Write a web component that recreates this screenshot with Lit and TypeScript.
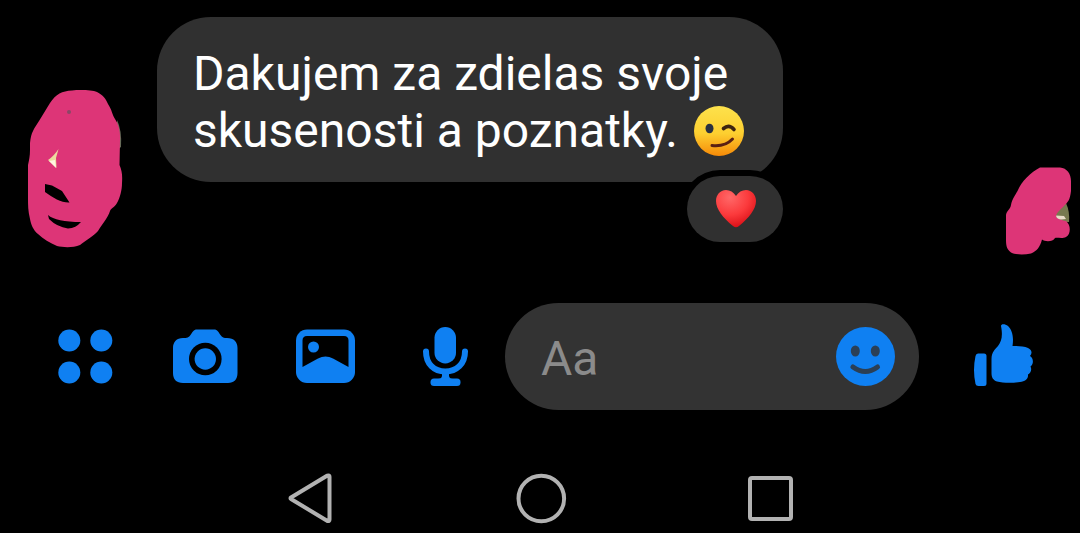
import { LitElement, html, css } from "lit";
import { customElement, state } from "lit/decorators.js";

@customElement("chat-thread")
class ChatThread extends LitElement {
  static styles = css`
    :host {
      display: block;
      padding: 17px 8px 0 28px;
    }
    .row {
      display: flex;
      align-items: flex-start;
      min-height: 238px;
    }
    .sender {
      flex: none;
      padding-top: 73px;
      margin-right: 34px;
    }
    .seen {
      flex: none;
      margin-left: auto;
      align-self: flex-end;
    }
    svg {
      display: block;
    }
    .message {
      position: relative;
    }
    .bubble {
      margin: 0;
      padding: 28px 38px 23px 36px;
      border-radius: 54px;
      background: #303030;
      color: #fff;
      font-size: 48px;
      line-height: 57px;
    }
    .emoji {
      display: inline-block;
      margin-left: 3px;
      vertical-align: -10px;
    }
    .reaction {
      position: absolute;
      right: 0;
      bottom: -60px;
      display: flex;
      align-items: center;
      justify-content: center;
      width: 96px;
      height: 66px;
      padding: 0 0 0 2px;
      border: 0;
      border-radius: 33px;
      background: #303030;
      box-shadow: 0 0 0 6px #000;
    }
  `;

  render() {
    return html`
      <div class="row">
        <div class="sender">
          <svg width="95" height="158" viewBox="28 90 95 158" role="img" aria-label="Sender">
            <path fill="#676b58" d="M117 120Q122 130 121 147L117 150Z" />
            <path
              fill="#dd3577"
              d="M72 90.500C80 89.500 92 90 97 92C103 95 106 99 108 104C112 110 112 114 115 119C119 125 120.500 132 120 140L119.500 165C122 171 122.500 175 122 183C122 190 120 198 117 203C114 208 111 208 110 211C108 218 102 224 98 231C94 236 86 240 80 245C73 248 63 247.500 57 246C50 243 43 239 38 234C33 230 31 224 30 219C28 211 28 205 28 198L28 165C29 160 30 156 30 150L30 143C31 132 34 129 39 121L50 103C56 94 62 91 72 90.500Z"
            />
            <path fill="#000" d="M45 184L52 185.500L62 191L69.500 202.500C62 203 53 198 45 192ZM48 215Q56 222 81 222Q76 228 68 228.500Q57 227 49 219Z" />
            <path fill="#ecdc9e" d="M58.500 149L56 158L56.500 168L48 160Q54 156 58.500 149Z" />
            <path fill="#fff6df" d="M49 161L55 160L56 168Z" />
            <circle cx="69" cy="112" r="2" fill="#8a4766" />
          </svg>
        </div>
        <div class="message">
          <p class="bubble">
            Dakujem za zdielas svoje<br />skusenosti a poznatky.
            <svg class="emoji" width="52" height="52" viewBox="0 0 52 52" role="img" aria-label="Winking face">
              <defs>
                <linearGradient id="face" x1="0" y1="0" x2="0" y2="1">
                  <stop offset="0" stop-color="#fde24c" />
                  <stop offset="0.550" stop-color="#fdcf30" />
                  <stop offset="1" stop-color="#f68a08" />
                </linearGradient>
              </defs>
              <circle cx="26" cy="26" r="25" fill="url(#face)" />
              <ellipse cx="16.500" cy="23.500" rx="4" ry="4.800" fill="#2a3040" />
              <path d="M30.500 23.500Q36 19 41 24.500" fill="none" stroke="#3d2410" stroke-width="3.600" stroke-linecap="round" />
              <path d="M19 40.500Q32 42 39.500 34" fill="none" stroke="#5a2013" stroke-width="3" stroke-linecap="round" />
            </svg>
          </p>
          <button class="reaction" type="button" aria-label="Heart reaction">
            <svg width="42" height="40" viewBox="0 0 42 40">
              <defs>
                <radialGradient id="heart" cx="0.350" cy="0.200" r="0.850">
                  <stop offset="0" stop-color="#ff6868" />
                  <stop offset="0.550" stop-color="#fb3a3c" />
                  <stop offset="1" stop-color="#d80c14" />
                </radialGradient>
              </defs>
              <path
                fill="url(#heart)"
                d="M21 7C23.500 3 27 1 31 1C37 1 41 6 41 12C41 20 34 29 24 37Q21 39.500 18 37C8 29 1 20 1 12C1 6 5 1 11 1C15 1 18.500 3 21 7Z"
              />
            </svg>
          </button>
        </div>
        <svg class="seen" width="67" height="88" viewBox="1005 167 67 88" role="img" aria-label="Seen">
          <path fill="#77794f" d="M1066 203Q1070 212 1069 222L1056 222L1054 212Z" />
          <path fill="#e9dcc8" d="M1056 215.500L1064 216L1066 219L1057 220Z" />
          <path
            fill="#dd3577"
            d="M1040 167.500L1060 167.500C1067 168 1071 174 1071 181L1071 191C1070 200 1068 202 1064 206C1060 210 1056 213 1056 217C1059 220 1062 220 1066 221C1071 225 1071 234 1066 237C1062 239 1057 237 1055 238C1053 242 1045 242 1042 239.500C1040 247 1037 251 1031 253.500C1024 255 1016 255 1011 252.500C1006 249 1006 244 1006 238L1006 215C1007 210 1010 210 1011 205C1012 199 1015 196 1018 190C1021 182 1031 172 1040 167.500Z"
          />
        </svg>
      </div>
    `;
  }
}

@customElement("chat-composer")
class ChatComposer extends LitElement {
  static styles = css`
    :host {
      display: flex;
      align-items: center;
      margin-top: 48px;
      padding: 0 16px 0 25px;
    }
    button {
      display: flex;
      flex: none;
      align-items: center;
      justify-content: center;
      padding: 0;
      border: 0;
      background: none;
      color: #0f80f2;
    }
    svg {
      display: block;
      fill: currentColor;
    }
    .action {
      width: 120px;
    }
    .field {
      display: flex;
      flex: 1;
      align-items: center;
      min-width: 0;
      height: 107px;
      margin-right: 25px;
      padding: 0 24px 0 36px;
      box-sizing: border-box;
      border-radius: 54px;
      background: #333;
    }
    input {
      flex: 1;
      min-width: 0;
      padding: 4px 0 0;
      border: 0;
      outline: 0;
      background: none;
      color: #fff;
      font-family: inherit;
      font-size: 48px;
      line-height: 57px;
    }
    input::placeholder {
      color: #8b8b8b;
      opacity: 1;
    }
    .line {
      fill: none;
      stroke: currentColor;
      stroke-linecap: round;
    }
    .cut {
      fill: #000;
    }
    .face {
      fill: #2b3f55;
    }
    .smile {
      fill: none;
      stroke: #2b3f55;
      stroke-width: 5;
      stroke-linecap: round;
    }
  `;

  @state() private draft = "";

  private onInput(e: Event) {
    this.draft = (e.target as HTMLInputElement).value;
  }

  render() {
    return html`
      <button class="action" type="button" aria-label="More">
        <svg width="72" height="73" viewBox="49 320 72 73">
          <circle cx="69.300" cy="340.500" r="11" />
          <circle cx="101.300" cy="340.500" r="11" />
          <circle cx="69.300" cy="372.500" r="11" />
          <circle cx="101.300" cy="372.500" r="11" />
        </svg>
      </button>
      <button class="action" type="button" aria-label="Camera">
        <svg width="72" height="73" viewBox="169 320 72 73">
          <path
            d="M197 329.500H214C217.500 329.500 218.500 332 220.500 335C222 337.500 224 338 227 338C234 338 237.500 342 237.500 348V373C237.500 379.500 234 383 228 383H183C176.500 383 173 379.500 173 373V348C173 342 176.500 338 183 338C187 338 189 337.500 190.500 335C192.500 332 193.500 329.500 197 329.500Z"
          />
          <circle class="cut" cx="205.300" cy="359" r="16.300" />
          <circle cx="205.300" cy="359" r="10.700" />
        </svg>
      </button>
      <button class="action" type="button" aria-label="Gallery">
        <svg width="72" height="73" viewBox="289 320 72 73">
          <rect x="296" y="329.500" width="59" height="53.500" rx="11" />
          <path
            class="cut"
            d="M307 336H344Q348.500 336 348.500 340.500V367L333 358.500Q325.500 354.500 318 358.500L302.500 367V340.500Q302.500 336 307 336Z"
          />
          <circle cx="313.500" cy="347" r="5.500" />
        </svg>
      </button>
      <button class="action" type="button" aria-label="Voice message">
        <svg width="72" height="73" viewBox="409 320 72 73">
          <rect x="434.500" y="327" width="21.500" height="36.500" rx="10.700" />
          <path class="line" stroke-width="6" d="M426 351.500C426 364 434 371.500 445.300 371.500C456.500 371.500 465 364 465 351.500" />
          <path d="M442 372H449V376Q449.500 379 453 379H438Q441.500 379 442 376Z" />
          <rect x="430.500" y="378.500" width="30" height="7.500" rx="3.500" />
        </svg>
      </button>
      <div class="field">
        <input type="text" aria-label="Message" placeholder="Aa" .value=${this.draft} @input=${this.onInput} />
        <button type="button" aria-label="Emoji">
          <svg width="59" height="59" viewBox="836 327 59 59">
            <circle cx="865.500" cy="356.500" r="29.500" />
            <ellipse class="face" cx="855.300" cy="351" rx="4.500" ry="5.600" />
            <ellipse class="face" cx="875.300" cy="351" rx="4.500" ry="5.600" />
            <path class="smile" d="M853 367Q865.300 376 877.500 367" />
          </svg>
        </button>
      </div>
      <button class="action" type="button" aria-label="Like">
        <svg width="72" height="73" viewBox="968 320 72 73">
          <path d="M978 353.500H984Q986.500 353.500 986.500 356V383.500Q986.500 386 984 386H978.500Q976 386 975.500 384Q972.500 370 975.500 356Q976 353.500 978 353.500Z" />
          <path
            d="M1001 326C1001 323.500 1005 323.500 1008 326C1012 330 1014 336 1012.500 346C1017 346 1024 346 1028 348C1032 350 1032.500 353 1030 356C1033.500 358 1034 364 1030.500 366.500C1032 369.500 1031 373 1028 374.500C1028.500 379 1025 381.500 1020 382C1013 383.200 1003 383.200 997 381.500C993 380 991.500 377.500 991.500 373V359C991.500 352 995 349.500 998 346C1001.500 341.500 1003 336 1001 326Z"
          />
        </svg>
      </button>
    `;
  }
}

@customElement("system-nav")
class SystemNav extends LitElement {
  static styles = css`
    :host {
      display: block;
      margin-top: 54px;
    }
    nav {
      display: grid;
      grid-template-columns: repeat(3, 230px);
      justify-content: center;
    }
    button {
      display: flex;
      align-items: center;
      justify-content: center;
      height: 69px;
      padding: 0;
      border: 0;
      background: none;
    }
    svg {
      display: block;
      fill: none;
      stroke: #b2b2b2;
      stroke-width: 4;
      stroke-linejoin: round;
    }
  `;

  render() {
    return html`
      <nav aria-label="System">
        <button type="button" aria-label="Back">
          <svg width="56" height="57" viewBox="282 470 56 57">
            <path d="M328.500 475.500Q329.500 475.500 329.500 477V519.500Q329.500 521.500 327.500 521L291 499Q290 498.200 291 497.500L327 475.700Z" />
          </svg>
        </button>
        <button type="button" aria-label="Home">
          <svg width="56" height="57" viewBox="512 470 56 57">
            <circle cx="541.300" cy="498.500" r="22.800" />
          </svg>
        </button>
        <button type="button" aria-label="Recent apps">
          <svg width="56" height="57" viewBox="742 470 56 57">
            <rect x="750" y="478" width="41" height="41" rx="2" />
          </svg>
        </button>
      </nav>
    `;
  }
}

@customElement("app-root")
class AppRoot extends LitElement {
  static styles = css`
    :host {
      display: block;
      min-height: 100vh;
      background: #000;
      font-family: Roboto, "Liberation Sans", sans-serif;
    }
  `;

  render() {
    return html`
      <chat-thread></chat-thread>
      <chat-composer></chat-composer>
      <system-nav></system-nav>
    `;
  }
}
